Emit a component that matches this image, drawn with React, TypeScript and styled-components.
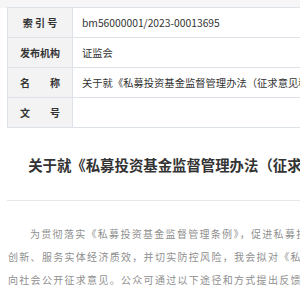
import styled, { createGlobalStyle } from 'styled-components'

const Global = createGlobalStyle`
  html, body {
    margin: 0;
    padding: 0;
    background: #fff;
    overflow: hidden;
  }
  body {
    font-family: "Microsoft YaHei", "Noto Sans CJK SC", sans-serif;
  }
`

const TopStrip = styled.div`
  height: 8px;
  background: #f6f6f6;
`

const Page = styled.div`
  width: 510px;
  margin-left: 7px;
`

const InfoTable = styled.table`
  width: 100%;
  border-collapse: collapse;
  border: 1px solid #dde2e8;
  border-top: 0;
  margin-top: -1px;
  table-layout: fixed;
`

const Label = styled.th`
  width: 64px;
  height: 29px;
  padding: 0;
  background: #f3f3f3;
  border: 1px solid #dde2e8;
  color: #333;
  font-size: 10px;
  font-weight: 600;
  text-align: center;
  white-space: pre;
`

const Value = styled.td`
  height: 29px;
  padding: 0 0 0 9px;
  border: 1px solid #dde2e8;
  color: #333;
  font-size: 10.3px;
  white-space: nowrap;
  overflow: hidden;
`

const Title = styled.h1`
  margin: 0;
  padding: 26px 0 24px;
  font-size: 14.4px;
  font-weight: 700;
  line-height: 22px;
  color: #333;
  text-align: center;
  white-space: nowrap;
  border-bottom: 1px solid #e8e8e8;
`

const Body = styled.p`
  margin: 21px 0 0;
  padding-left: 1px;
  font-size: 10px;
  letter-spacing: 1.3px;
  line-height: 23px;
  color: #8f8f8f;
  white-space: nowrap;
`

const Indent = styled.span`
  display: inline-block;
  width: 22px;
`

const rows: [string, string][] = [
  ['索 引 号', 'bm56000001/2023-00013695'],
  ['发布机构', '证监会'],
  ['名　　称', '关于就《私募投资基金监督管理办法（征求意见稿）》公开征求意见的通知'],
  ['文　　号', ''],
]

const lines = [
  '为贯彻落实《私募投资基金监督管理条例》，促进私募投资基金行业规范健康发展，提升私募基金服务科技',
  '创新、服务实体经济质效，并切实防控风险，我会拟对《私募投资基金监督管理暂行办法》进行修订，现',
  '向社会公开征求意见。公众可通过以下途径和方式提出反馈意见：',
]

export default function App() {
  return (
    <>
      <Global />
      <TopStrip />
      <Page>
        <InfoTable>
          <tbody>
            {rows.map(([k, v]) => (
              <tr key={k}>
                <Label>{k}</Label>
                <Value>{v}</Value>
              </tr>
            ))}
          </tbody>
        </InfoTable>
        <Title>关于就《私募投资基金监督管理办法（征求意见稿）》公开征求意见的通知</Title>
        <Body>
          {lines.map((l, i) => (
            <span key={i}>
              {i === 0 && <Indent />}
              {l}
              <br />
            </span>
          ))}
        </Body>
      </Page>
    </>
  )
}
